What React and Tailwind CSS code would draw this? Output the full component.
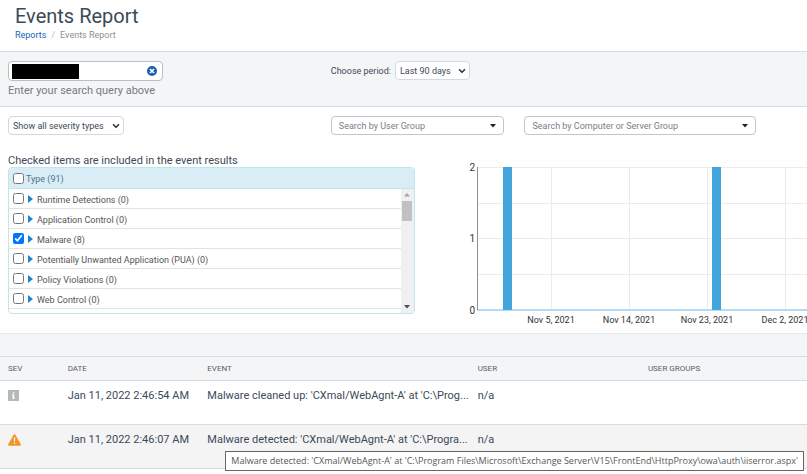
import { useState } from "react";
import { ChevronDown } from "lucide-react";

const eventTypes = [
  { id: "runtime", label: "Runtime Detections (0)" },
  { id: "appcontrol", label: "Application Control (0)" },
  { id: "malware", label: "Malware (8)" },
  { id: "pua", label: "Potentially Unwanted Application (PUA) (0)" },
  { id: "policy", label: "Policy Violations (0)" },
  { id: "web", label: "Web Control (0)" },
];

const events = [
  {
    sev: "info",
    date: "Jan 11, 2022 2:46:54 AM",
    event: "Malware cleaned up: 'CXmal/WebAgnt-A' at 'C:\\Prog...",
    user: "n/a",
  },
  {
    sev: "warning",
    date: "Jan 11, 2022 2:46:07 AM",
    event: "Malware detected: 'CXmal/WebAgnt-A' at 'C:\\Progra...",
    user: "n/a",
    tip: "Malware detected: 'CXmal/WebAgnt-A' at 'C:\\Program Files\\Microsoft\\Exchange Server\\V15\\FrontEnd\\HttpProxy\\owa\\auth\\iiserror.aspx'",
  },
];

const ticks = [
  { x: 96, label: "Nov 5, 2021" },
  { x: 174, label: "Nov 14, 2021" },
  { x: 252, label: "Nov 23, 2021" },
  { x: 330, label: "Dec 2, 2021" },
];

const bars = [48, 257];

function SmallSelect({ id, options, className }) {
  return (
    <div className={`relative ${className}`}>
      <select id={id} aria-label={options[0]} className="block h-[19px] w-full appearance-none rounded-sm border border-[#d5d9dd] bg-white pl-1 text-[9px] leading-4 text-[#3c4a58]">
        {options.map((o) => (
          <option key={o}>{o}</option>
        ))}
      </select>
      <ChevronDown size={10} strokeWidth={4} className="pointer-events-none absolute top-[5px] right-[3px] text-[#2b3946]" />
    </div>
  );
}

function GroupSelect({ label, className }) {
  return (
    <div className={`relative ${className}`}>
      <select aria-label={label} className="block h-[19px] w-full appearance-none rounded-sm border border-[#c3c6c9] bg-white pl-[7px] text-[9px] leading-4 text-[#7a8087]">
        <option>{label}</option>
      </select>
      <svg className="pointer-events-none absolute top-2 right-2" width="6" height="4" viewBox="0 0 6 4">
        <path d="M0 0h6L3 3.5z" fill="#222" />
      </svg>
    </div>
  );
}

function SevIcon({ type }) {
  if (type === "info") {
    return (
      <svg width="11" height="11" viewBox="0 0 11 11" role="img" aria-label="Info">
        <path d="M0 0h11v11H0z" fill="#b3b8bb" />
        <path d="M4.7 2.2h1.6v1.5H4.7zM4 4.6h2.3v3.2H7v1H4v-1h.7V5.6H4z" fill="#fff" />
      </svg>
    );
  }
  return (
    <svg width="13" height="12" viewBox="0 0 13 12" role="img" aria-label="Warning">
      <path d="M6.5.2c.4 0 .7.2.9.5l5.4 9.6c.4.7 0 1.4-.8 1.4H1c-.8 0-1.2-.7-.8-1.4L5.6.7c.2-.3.5-.5.9-.5z" fill="#f0962a" />
      <path d="M5.8 3.6h1.4L7 7.5H6zM5.8 8.4h1.4v1.4H5.8z" fill="#fff" />
    </svg>
  );
}

function EventsChart() {
  return (
    <svg width="100%" height="168" className="block overflow-hidden" role="img" aria-label="Events per day">
      {/* grid */}
      <g stroke="#ebebeb" shapeRendering="crispEdges">
        {[7, 43, 78, 114].map((y) => (
          <line key={y} x1="22" x2="100%" y1={y + 0.5} y2={y + 0.5} />
        ))}
        {ticks.map((t) => (
          <line key={t.x} x1={t.x + 0.5} x2={t.x + 0.5} y1="7" y2="150" />
        ))}
      </g>
      <rect x="22" y="149" width="100%" height="2" fill="#b5daf1" />
      {bars.map((x) => (
        <rect key={x} x={x} y="7" width="9" height="143" fill="#42a5db" />
      ))}
      <rect x="22" y="7" width="1" height="143" fill="#8f8f8f" />
      <g fill="#333">
        <g fontSize="10" textAnchor="end">
          <text x="20" y="11">2</text>
          <text x="20" y="82">1</text>
          <text x="20" y="154">0</text>
        </g>
        <g fontSize="9" textAnchor="middle">
          {ticks.map((t) => (
            <text key={t.label} x={t.x} y="163">{t.label}</text>
          ))}
        </g>
      </g>
    </svg>
  );
}

function TypeFilter() {
  const [checked, setChecked] = useState({ malware: true });

  const toggle = (id) => setChecked({ ...checked, [id]: !checked[id] });

  return (
    <div className="overflow-hidden rounded-sm border border-[#bfe6ef]">
      <label className="flex h-[21px] items-center gap-0.5 border-b border-[#bfe6ef] bg-[#d9edf7] pl-1 text-[9px] text-[#4f7388]">
        <input type="checkbox" className="size-[11px]" checked={!!checked.all} onChange={() => toggle("all")} />
        <span className="pt-1">Type (91)</span>
      </label>
      <div className="flex h-[124px]">
        <ul className="flex-1">
          {eventTypes.map((t) => (
            <li key={t.id} className="h-5 border-b border-[#e2e2e2]">
              <label className="flex h-full items-center pl-1 text-[9px] text-[#555]">
                <input type="checkbox" className="size-[11px] accent-[#0075ff]" checked={!!checked[t.id]} onChange={() => toggle(t.id)} />
                <svg className="mx-1" width="5" height="8" viewBox="0 0 5 8">
                  <path d="M0 0l5 4-5 4z" fill="#1b85d3" />
                </svg>
                <span className="pt-1">{t.label}</span>
              </label>
            </li>
          ))}
        </ul>
        {/* Scrollbar */}
        <div className="flex w-[13px] flex-col items-center bg-[#f0f0f0] py-1">
          <svg width="6" height="4" viewBox="0 0 6 4"><path d="M0 3.5h6L3 0z" fill="#a3a3a3" /></svg>
          <div className="mt-1 h-5 w-2.5 bg-[#c1c1c1]"></div>
          <svg className="mt-auto" width="6" height="4" viewBox="0 0 6 4"><path d="M0 0h6L3 3.5z" fill="#505050" /></svg>
        </div>
      </div>
    </div>
  );
}

function App() {
  const [query, setQuery] = useState("");

  return (
    <div className="min-h-screen overflow-hidden bg-white font-['Roboto',sans-serif] text-[#3c4a58]">
      <header className="h-[51px] px-[15px] pt-1">
        <h1 className="text-[20px] leading-6">Events Report</h1>
        <nav className="flex gap-[5px] pt-px text-[9px] leading-3">
          <a href="#reports" className="text-[#1d5fb0]">Reports</a>
          <span className="text-[#b5b9bd]">/</span>
          <span className="text-[#8b9095]">Events Report</span>
        </nav>
      </header>

      {/* Search bar */}
      <section className="grid h-14 grid-cols-[40%_60%] border-y border-[#d9dcdf] bg-[#f4f5f7] pt-[9px]">
        <div className="pl-2">
          <div className="relative h-5 w-[155px]">
            <input aria-label="Search query" value={query} onChange={(e) => setQuery(e.target.value)} className="block h-full w-full rounded-sm border border-[#b9bec3] bg-white pr-5 pl-1 text-[11px]" />
            <div className="pointer-events-none absolute top-[3px] left-1 h-[15px] w-[67px] bg-black"></div>
            <button type="button" aria-label="Clear search" onClick={() => setQuery("")} className="absolute top-[5px] right-[6px]">
              <svg className="block" width="10" height="10" viewBox="0 0 10 10">
                <circle cx="5" cy="5" r="5" fill="#1a5fb4" />
                <path d="M3 3l4 4M7 3l-4 4" stroke="#fff" strokeWidth="1.6" />
              </svg>
            </button>
          </div>
          <p className="mt-0.5 text-[11px] leading-4 text-[#767c82]">Enter your search query above</p>
        </div>
        <div className="flex items-start gap-1 pl-2">
          <label htmlFor="period" className="text-[9px] leading-5">Choose period:</label>
          <SmallSelect id="period" className="w-[75px]" options={["Last 90 days", "Last 30 days", "Last 7 days"]} />
        </div>
      </section>

      {/* Filters */}
      <section className="grid grid-cols-[40%_24%_36%] pt-[9px]">
        <div className="pl-2">
          <SmallSelect id="severity" className="w-[116px]" options={["Show all severity types", "High", "Medium", "Low"]} />
        </div>
        <GroupSelect label="Search by User Group" className="mr-3 ml-2" />
        <GroupSelect label="Search by Computer or Server Group" className="ml-2 w-58" />
      </section>

      <section className="flex h-[198px] pt-5">
        <div className="w-[51.4%] shrink-0 pl-2">
          <p className="text-[11px] leading-3">Checked items are included in the event results</p>
          <TypeFilter />
        </div>
        <div className="min-w-0 flex-1 pt-[5px] pl-10">
          <EventsChart />
        </div>
      </section>

      {/* Results */}
      <section className="border-t border-[#e6e8ea]">
        <div className="h-[22px] bg-[#f4f5f7]"></div>
        <table className="w-full table-fixed text-left">
          <thead>
            <tr className="h-6 border-y border-[#d9dcdf] bg-[#f4f5f7] text-[8px] text-[#5b6168]">
              <th className="w-[7.4%] pl-2 font-normal">SEV</th>
              <th className="w-[17.3%] pl-2 font-normal">DATE</th>
              <th className="w-[33.5%] pl-2 font-normal">EVENT</th>
              <th className="w-[21.1%] pl-2 font-normal">USER</th>
              <th className="pl-2 font-normal">USER GROUPS</th>
            </tr>
          </thead>
          <tbody>
            {events.map((e) => (
              <tr key={e.date} className="h-11 border-b border-[#d9dcdf] align-top text-[11px] leading-4 even:bg-[#f4f4f4]">
                <td className="pt-[9px] pl-2"><SevIcon type={e.sev} /></td>
                <td className="pt-[7px] pl-2 whitespace-nowrap">{e.date}</td>
                <td className="relative pt-[7px] pl-2">
                  <div className="truncate">{e.event}</div>
                  {e.tip && (
                    <div role="tooltip" className="absolute top-[26px] left-[26px] z-10 h-5 border border-[#666] bg-white px-[5px] font-['Open_Sans',sans-serif] text-[9px] leading-[18px] whitespace-nowrap text-[#575757]">
                      {e.tip}
                    </div>
                  )}
                </td>
                <td className="pt-[7px] pl-2">{e.user}</td>
                <td></td>
              </tr>
            ))}
          </tbody>
        </table>
      </section>
    </div>
  );
}

export default App;
